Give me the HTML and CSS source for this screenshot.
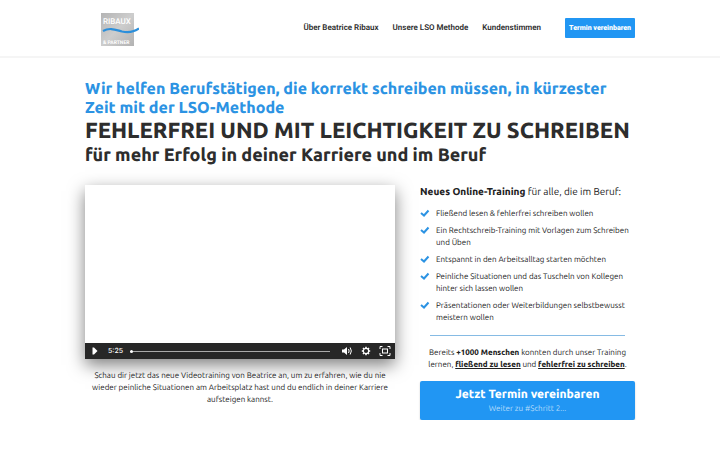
FILE: index.html
```html
<!DOCTYPE html>
<html lang="de">
<head>
    <meta charset="UTF-8">
    <meta name="viewport" content="width=device-width, initial-scale=1.0">
    <title>Ribaux &amp; Partner</title>
    <link rel="stylesheet" href="styles.css">
</head>
<body>

<header class="header">
    <div class="container header-inner">
        <a href="#" class="logo" aria-label="Ribaux &amp; Partner">
            <svg width="38" height="33" viewBox="0 0 38 33">
                <defs>
                    <linearGradient id="silver" x1="0" y1="0" x2="1" y2="1">
                        <stop offset="0" stop-color="#b4b4b4"/>
                        <stop offset="0.5" stop-color="#cdcdcd"/>
                        <stop offset="1" stop-color="#b2b2b2"/>
                    </linearGradient>
                </defs>
                <rect width="33" height="33" fill="url(#silver)"/>
                <text x="2" y="11" class="logo-name">RIBAUX</text>
                <text x="2" y="31" class="logo-partner">&amp; PARTNER</text>
                <path d="M2 18 C9 14 15 17 21 18.500 C28 20 33 19 38 15.500" fill="none" stroke="#2b8fdb" stroke-width="2.200"/>
            </svg>
        </a>
        <nav class="nav">
            <a href="#about">Über Beatrice Ribaux</a>
            <a href="#methode">Unsere LSO Methode</a>
            <a href="#stimmen">Kundenstimmen</a>
            <a href="#termin" class="nav-button">Termin vereinbaren</a>
        </nav>
    </div>
</header>

<main class="container">
    <h2 class="pre-headline">Wir helfen Berufstätigen, die korrekt schreiben müssen, in kürzester Zeit mit der LSO-Methode</h2>
    <h1 class="headline">FEHLERFREI UND MIT LEICHTIGKEIT ZU SCHREIBEN</h1>
    <h2 class="sub-headline">für mehr Erfolg in deiner Karriere und im Beruf</h2>

    <div class="columns">
        <section class="video-column">
            <div class="video">
                <div class="video-controls">
                    <button type="button" aria-label="Abspielen">
                        <svg width="12" height="12" viewBox="0 0 12 12"><path d="M3.500 2.500 H5 L8.500 6 L5 9.500 H3.500 Z" fill="#fff"/></svg>
                    </button>
                    <span class="time">5:25</span>
                    <input type="range" class="progress" min="0" max="325" value="0" aria-label="Position">
                    <button type="button" aria-label="Lautstärke">
                        <svg width="12" height="12" viewBox="0 0 12 12"><path d="M1 4.500 H3 L6 2 V10 L3 7.500 H1 Z" fill="#fff"/><path d="M7.500 4 Q8.800 6 7.500 8 M9.200 2.500 Q11.500 6 9.200 9.500" fill="none" stroke="#fff"/></svg>
                    </button>
                    <button type="button" aria-label="Einstellungen">
                        <svg width="12" height="12" viewBox="0 0 12 12"><circle cx="6" cy="6" r="2.700" fill="none" stroke="#fff" stroke-width="1.200"/><path d="M6 1.800 V3 M6 9 V10.200 M1.800 6 H3 M9 6 H10.200 M3 3 L3.900 3.900 M8.100 8.100 L9 9 M9 3 L8.100 3.900 M3.900 8.100 L3 9" stroke="#fff" stroke-width="1.500"/></svg>
                    </button>
                    <button type="button" aria-label="Vollbild">
                        <svg width="12" height="12" viewBox="0 0 12 12"><path d="M3.500 1.500 H1 V4 M8.500 1.500 H11 V4 M3.500 10.500 H1 V8 M8.500 10.500 H11 V8" fill="none" stroke="#fff"/><rect x="3.500" y="4" width="5" height="4" fill="none" stroke="#fff"/></svg>
                    </button>
                </div>
            </div>
            <p class="caption">Schau dir jetzt das neue Videotraining von Beatrice an, um zu erfahren, wie du nie wieder peinliche Situationen am Arbeitsplatz hast und du endlich in deiner Karriere aufsteigen kannst.</p>
        </section>

        <section class="info-column">
            <p class="intro"><strong>Neues Online-Training</strong> für alle, die im Beruf:</p>
            <ul class="checklist">
                <li><svg width="10" height="10" viewBox="0 0 10 10"><path d="M1 5 L4 7.500 L8.500 2.500" /></svg><span>Fließend lesen &amp; fehlerfrei schreiben wollen</span></li>
                <li><svg width="10" height="10" viewBox="0 0 10 10"><path d="M1 5 L4 7.500 L8.500 2.500" /></svg><span>Ein Rechtschreib-Training mit Vorlagen zum Schreiben und Üben</span></li>
                <li><svg width="10" height="10" viewBox="0 0 10 10"><path d="M1 5 L4 7.500 L8.500 2.500" /></svg><span>Entspannt in den Arbeitsalltag starten möchten</span></li>
                <li><svg width="10" height="10" viewBox="0 0 10 10"><path d="M1 5 L4 7.500 L8.500 2.500" /></svg><span>Peinliche Situationen und das Tuscheln von Kollegen hinter sich lassen wollen</span></li>
                <li><svg width="10" height="10" viewBox="0 0 10 10"><path d="M1 5 L4 7.500 L8.500 2.500" /></svg><span>Präsentationen oder Weiterbildungen selbstbewusst meistern wollen</span></li>
            </ul>
            <hr class="divider">
            <p class="proof">Bereits <strong>+1000 Menschen</strong> konnten durch unser Training lernen, <strong class="underline">fließend zu lesen</strong> und <strong class="underline">fehlerfrei zu schreiben</strong>.</p>
            <a href="#termin" class="cta">
                <span class="cta-title">Jetzt Termin vereinbaren</span>
                <span class="cta-sub">Weiter zu #Schritt 2...</span>
            </a>
        </section>
    </div>
</main>

</body>
</html>
```
FILE: styles.css
```css
* {
    box-sizing: border-box;
}

body {
    margin: 0;
    background-color: #fff;
    color: #222;
    font-family: Ubuntu, "Noto Sans", sans-serif;
    font-size: 8px;
    line-height: 12px;
    text-rendering: geometricPrecision;
}

h1, h2, p, ul {
    margin: 0;
    padding: 0;
}

h1, h2, strong {
    font-weight: 800;
}

.container {
    max-width: 550px;
    margin: 0 auto;
}

.header {
    border-bottom: 2px solid #f5f5f5;
    font-family: Roboto, sans-serif;
}

.header-inner {
    display: flex;
    align-items: center;
    justify-content: space-between;
    height: 56px;
    padding-left: 16px;
}

.logo svg {
    display: block;
    margin-top: 3px;
}

.logo text {
    font-family: Roboto, sans-serif;
    fill: #fff;
}

.logo-name {
    font-size: 8px;
    font-weight: 500;
}

.logo-partner {
    font-size: 5px;
    font-weight: 700;
}

.nav {
    display: flex;
    align-items: center;
    gap: 14px;
}

.nav a {
    color: #2d2d2d;
    font-size: 8px;
    font-weight: 600;
    text-decoration: none;
}

.nav .nav-button {
    margin-left: 10px;
    padding: 4px;
    border-radius: 1px;
    background-color: #2196f3;
    color: #fff;
    font-size: 7px;
    font-weight: 900;
}

.pre-headline {
    padding: 22px 20px 0 0;
    color: #2c93e3;
    font-size: 16px;
    line-height: 19px;
}

.headline {
    color: #2d2d2d;
    font-size: 22px;
    line-height: 26px;
}

.sub-headline {
    color: #2d2d2d;
    font-size: 18px;
    line-height: 22px;
}

.columns {
    display: grid;
    grid-template-columns: 310fr 215fr;
    gap: 25px;
    margin-top: 19px;
}

.video {
    display: flex;
    flex-direction: column;
    justify-content: flex-end;
    aspect-ratio: 16 / 9;
    background-color: #fff;
    box-shadow: 0 6px 16px rgba(0, 0, 0, 0.5);
}

.video-controls {
    display: flex;
    align-items: center;
    gap: 7px;
    height: 16px;
    padding: 0 4px;
    background-color: #272727;
    color: #fff;
}

.video-controls button {
    display: flex;
    padding: 0;
    border: none;
    background: none;
    cursor: pointer;
}

.time {
    font-family: Inter, sans-serif;
    font-size: 7px;
    font-weight: 500;
}

.progress {
    flex: 1;
    min-width: 0;
    height: 1px;
    margin: 0 4px 0 0;
    appearance: none;
    background-color: #aaa;
}

.progress::-webkit-slider-thumb {
    appearance: none;
    width: 3px;
    height: 3px;
    border-radius: 50%;
    background-color: #fff;
}

.caption {
    margin-top: 11px;
    text-align: center;
}

.intro {
    font-size: 10px;
    line-height: 13px;
}

.checklist {
    display: grid;
    gap: 5px;
    margin-top: 10px;
    list-style: none;
}

.checklist li {
    display: flex;
    gap: 6px;
}

.checklist svg {
    flex: none;
    fill: none;
    stroke: #2c93e3;
    stroke-width: 2;
}

.divider {
    margin: 11px 10px 11px;
    border: none;
    border-top: 1px solid #86bbe4;
}

.proof {
    text-align: center;
}

.underline {
    text-decoration: underline;
}

.cta {
    display: flex;
    flex-direction: column;
    margin-top: 10px;
    padding: 6px 8px 5px;
    border-radius: 2px;
    background-color: #2196f3;
    box-shadow: 0 1px 2px rgba(0, 0, 0, 0.2);
    color: #fff;
    text-align: center;
    text-decoration: none;
}

.cta-title {
    font-size: 12px;
    font-weight: 800;
    line-height: 16px;
}

.cta-sub {
    color: #b5dcfb;
}
```
